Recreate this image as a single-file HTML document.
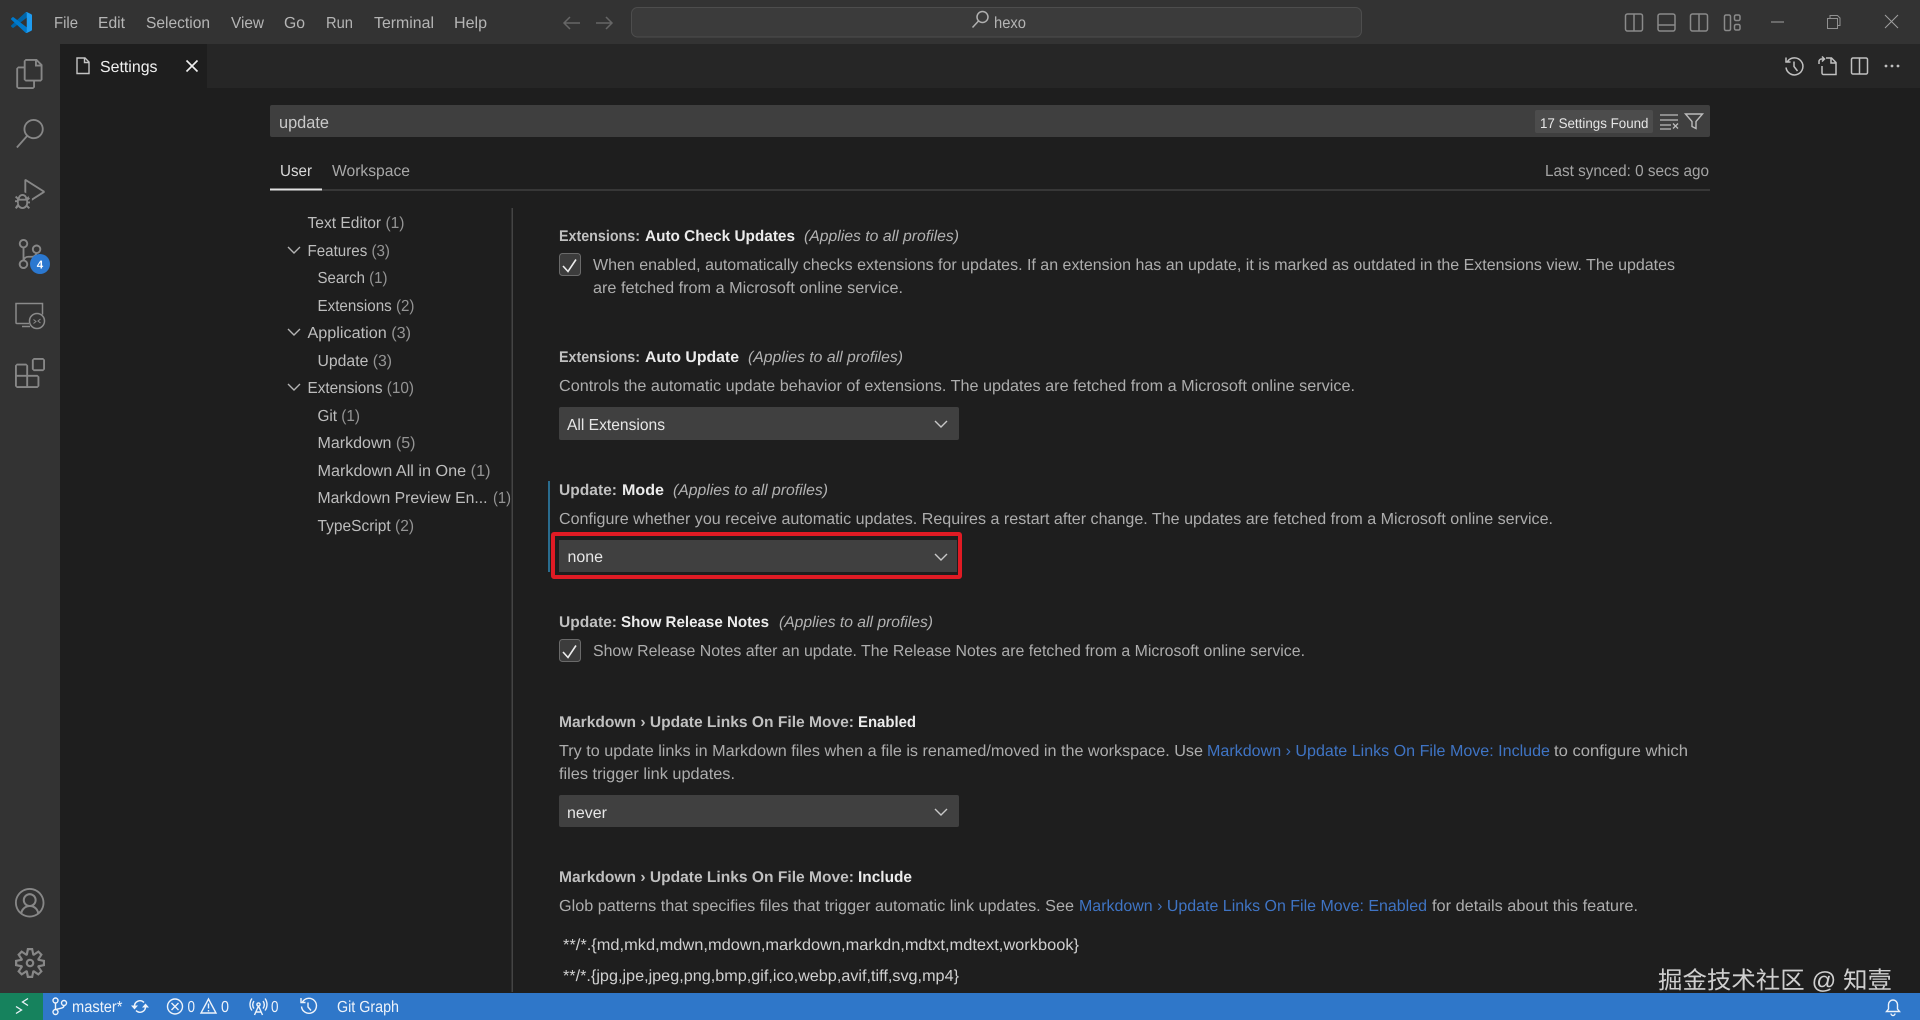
<!DOCTYPE html>
<html lang="en"><head><meta charset="utf-8"><title>Settings - hexo</title>
<style>
html,body{margin:0;padding:0;background:#1e1e1e;overflow:hidden}
svg{display:block}
text{font-family:"Liberation Sans","Noto Sans CJK SC",sans-serif;font-size:16px;text-rendering:geometricPrecision;white-space:pre}
.m{fill:#b5b5b5}.d{fill:#adadad}.t{fill:#c0c0c0;font-weight:700;font-size:15.5px}.b{fill:#ececec;font-weight:700;font-size:15.5px}
.i{fill:#b2b2b2;font-style:italic;font-size:15.5px}.l{fill:#3f74c4}.c{fill:#bdbdbd}.n{fill:#949494}.s{fill:#e6e6e6}.w{fill:#eef3fa}
.ic{fill:none;stroke:#8a8a8a;stroke-width:1.5}.ac{fill:#878787}.wi{fill:none;stroke:#eef3fa;stroke-width:1.4}
</style></head><body>
<svg xmlns="http://www.w3.org/2000/svg" width="1920" height="1020" viewBox="0 0 1920 1020">
<rect width="1920" height="1020" fill="#1e1e1e"/>
<!-- title bar -->
<rect width="1920" height="44" fill="#333"/>
<g transform="translate(11,12) scale(.21)">
<path fill="#0065a9" d="M96.4614 10.7962L75.8569 0.875542C73.4719 -0.272773 70.6217 0.211611 68.75 2.08333L1.29858 63.5832C-0.515693 65.2373 -0.513607 68.0937 1.30308 69.7452L6.81272 74.754C8.29793 76.1042 10.5347 76.2036 12.1338 74.9905L93.3609 13.3699C96.086 11.3026 100 13.2462 100 16.6667V16.4275C100 14.0265 98.6246 11.8378 96.4614 10.7962Z"/>
<path fill="#007acc" d="M96.4614 89.2038L75.8569 99.1245C73.4719 100.273 70.6217 99.7884 68.75 97.9167L1.29858 36.4169C-0.515693 34.7627 -0.513607 31.9063 1.30308 30.2548L6.81272 25.246C8.29793 23.8958 10.5347 23.7964 12.1338 25.0095L93.3609 86.6301C96.086 88.6974 100 86.7538 100 83.3334V83.5726C100 85.9735 98.6246 88.1622 96.4614 89.2038Z"/>
<path fill="#1f9cf0" d="M75.8578 99.1263C73.4721 100.274 70.6219 99.7885 68.75 97.9166C71.0564 100.223 75 98.5895 75 95.3278V4.67213C75 1.41039 71.0564 -0.223106 68.75 2.08329C70.6219 0.211402 73.4721 -0.273666 75.8578 0.873633L96.4587 10.7807C98.6234 11.8217 100 14.0112 100 16.4132V83.5871C100 85.9891 98.6234 88.1786 96.4586 89.2196L75.8578 99.1263Z"/>
</g>
<text class="m" x="54" y="28" textLength="24" lengthAdjust="spacingAndGlyphs">File</text>
<text class="m" x="98" y="28" textLength="27" lengthAdjust="spacingAndGlyphs">Edit</text>
<text class="m" x="146" y="28" textLength="64" lengthAdjust="spacingAndGlyphs">Selection</text>
<text class="m" x="231" y="28" textLength="33" lengthAdjust="spacingAndGlyphs">View</text>
<text class="m" x="284" y="28" textLength="21" lengthAdjust="spacingAndGlyphs">Go</text>
<text class="m" x="326" y="28" textLength="27" lengthAdjust="spacingAndGlyphs">Run</text>
<text class="m" x="374" y="28" textLength="60" lengthAdjust="spacingAndGlyphs">Terminal</text>
<text class="m" x="454" y="28" textLength="33" lengthAdjust="spacingAndGlyphs">Help</text>
<path d="M580 23H564M570 17l-6 6 6 6M596 23h16M606 17l6 6-6 6" fill="none" stroke="#666" stroke-width="1.5"/>
<rect x="631.5" y="7.5" width="730" height="29.5" rx="6" fill="#3b3b3b" stroke="#4d4d4d"/>
<circle cx="982.5" cy="17" r="5.5" class="ic" style="stroke:#b0b0b0"/><path d="M978.5 21l-6 6.5" class="ic" style="stroke:#b0b0b0"/>
<text class="m" x="994" y="28" textLength="32" lengthAdjust="spacingAndGlyphs">hexo</text>
<g class="ic">
<rect x="1625.5" y="14" width="17" height="17" rx="2"/><path d="M1634 14v17"/>
<rect x="1658" y="14" width="17" height="17" rx="2"/><path d="M1658 25h17"/>
<rect x="1690.5" y="14" width="17" height="17" rx="2"/><path d="M1699 14v17"/>
<rect x="1724.5" y="15" width="6" height="15.5" rx="1.5"/><rect x="1734.5" y="15" width="5.5" height="5.5" rx="1.5"/><rect x="1734.5" y="24.5" width="5.5" height="5.5" rx="1.5"/>
</g>
<path d="M1771 22h13" stroke="#a0a0a0" stroke-width="1"/>
<path d="M1827.5 18.500h10v10h-10zM1830 18.500v-3h7.500l2.500 2.500v7.500h-2.500" fill="none" stroke="#909090"/>
<path d="M1885 15l13 13M1898 15l-13 13" stroke="#a0a0a0" stroke-width="1"/>
<!-- activity bar -->
<rect y="44" width="60" height="949" fill="#333"/>
<g class="ac">
<path transform="translate(15,59) scale(1.25)" d="M17.5 0h-9L7 1.5V6H2.5L1 7.500v15.070L2.500 24h12.070L16 22.570V18h4.700l1.300-1.430V4.500L17.500 0zm0 2.120l2.380 2.380H17.500V2.120zm-3 20.380h-12v-15H7v9.070L8.500 18h6v4.500zm6-6h-12v-15H16V6h4.500v10.500z"/>
<path transform="translate(15,119) scale(1.22)" d="M15.250 0a8.250 8.250 0 0 0-6.180 13.720L1 22.880l1.120 1 8.050-9.120A8.251 8.251 0 1 0 15.250.01V0zm0 15a6.750 6.750 0 1 1 0-13.500 6.750 6.750 0 0 1 0 13.500z"/>
<path transform="translate(15,179) scale(1.25)" d="M10.940 13.500l-1.320 1.320a3.730 3.730 0 0 0-7.240 0L1.060 13.500 0 14.560l1.720 1.720-.22.720H0v1.500h1.500v.080c.077.489.214.966.41 1.420L0 22.940 1.060 24l1.650-1.650A4.308 4.308 0 0 0 6 24a4.310 4.310 0 0 0 3.290-1.650L10.940 24 12 22.940l-1.910-1.920c.196-.454.333-.931.41-1.420v-.1H12V18h-1.500l-.22-.72L12 15.560l-1.060-1.060zM6 13.500a2.250 2.250 0 0 1 2.250 2.250h-4.500A2.250 2.250 0 0 1 6 13.500zm3 6a3.330 3.330 0 0 1-3 3 3.330 3.330 0 0 1-3-3v-2.250h6v2.250zm14.760-9.900v1.260L13.500 17.370V15.600l8.500-5.370L9 2v9.460a5.070 5.070 0 0 0-1.500-.72V.63L8.640 0l15.120 9.600z"/>
<path transform="translate(15,239) scale(1.25)" d="M21.007 8.222A3.738 3.738 0 0 0 15.045 5.200a3.737 3.737 0 0 0 1.156 6.583 2.988 2.988 0 0 1-2.668 1.670h-2.990a4.456 4.456 0 0 0-2.989 1.165V7.400a3.737 3.737 0 1 0-1.494 0v9.117a3.776 3.776 0 1 0 1.816.099 2.990 2.990 0 0 1 2.668-1.667h2.990a4.484 4.484 0 0 0 4.223-3.039 3.736 3.736 0 0 0 3.250-3.687zM4.565 3.738a2.242 2.242 0 1 1 4.484 0 2.242 2.242 0 0 1-4.484 0zm4.484 16.441a2.242 2.242 0 1 1-4.484 0 2.242 2.242 0 0 1 4.484 0zm8.221-9.715a2.242 2.242 0 1 1 0-4.485 2.242 2.242 0 0 1 0 4.485z"/>
<path transform="translate(15,358) scale(1.25)" d="M13.500 1.500L15 0h7.500L24 1.500V9l-1.500 1.500H15L13.500 9V1.500zm1.500 0V9h7.500V1.500H15zM0 15V6l1.500-1.500H9L10.500 6v7.500H18l1.500 1.500v7.500L18 24H1.500L0 22.500V15zm9-1.500V6H1.500v7.500H9zM9 15H1.500v7.500H9V15zm1.500 7.500H18V15h-7.500v7.500z"/>
<path transform="translate(15,888) scale(1.84)" d="M16 7.992C16 3.580 12.416 0 8 0S0 3.580 0 7.992c0 2.430 1.104 4.620 2.832 6.090.016.016.032.016.032.032.144.112.288.224.448.336.080.048.144.111.224.175A7.980 7.980 0 0 0 8.016 16a7.980 7.980 0 0 0 4.480-1.375c.080-.048.144-.111.224-.160.144-.111.304-.223.448-.335.016-.016.032-.016.032-.032 1.696-1.487 2.800-3.676 2.800-6.106zm-8 7.001c-1.504 0-2.880-.48-4.016-1.279.016-.128.048-.255.080-.383a4.170 4.170 0 0 1 .416-.991c.176-.304.384-.576.640-.816.240-.24.528-.463.816-.639.304-.176.624-.304.976-.4A4.150 4.150 0 0 1 8 10.342a4.185 4.185 0 0 1 2.928 1.166c.368.368.656.8.864 1.295.112.288.192.592.24.911A7.030 7.030 0 0 1 8 14.993zm-2.448-7.400a2.490 2.490 0 0 1-.208-1.024c0-.351.064-.703.208-1.023.144-.32.336-.607.576-.847.240-.24.528-.431.848-.575.320-.144.672-.208 1.024-.208.368 0 .704.064 1.024.208.320.144.608.336.848.575.240.240.432.528.576.847.144.320.208.672.208 1.023 0 .368-.064.704-.208 1.023a2.840 2.840 0 0 1-.576.848 2.840 2.840 0 0 1-.848.575 2.715 2.715 0 0 1-2.064 0 2.840 2.840 0 0 1-.848-.575 2.526 2.526 0 0 1-.56-.848zm7.424 5.306c0-.032-.016-.048-.016-.080a5.220 5.220 0 0 0-.688-1.406 4.883 4.883 0 0 0-1.088-1.135 5.207 5.207 0 0 0-1.040-.608 2.820 2.820 0 0 0 .464-.383 4.200 4.200 0 0 0 .624-.784 3.624 3.624 0 0 0 .528-1.934 3.710 3.710 0 0 0-.288-1.470 3.799 3.799 0 0 0-.816-1.199 3.845 3.845 0 0 0-1.200-.8 3.720 3.720 0 0 0-1.472-.287 3.720 3.720 0 0 0-1.472.288 3.631 3.631 0 0 0-1.200.815 3.840 3.840 0 0 0-.8 1.199 3.710 3.710 0 0 0-.288 1.470c0 .352.048.688.144 1.007.096.336.224.640.4.927.160.288.384.544.624.784.144.144.304.271.48.383a5.120 5.120 0 0 0-1.040.624c-.416.320-.784.703-1.088 1.119a4.999 4.999 0 0 0-.688 1.406c-.016.032-.016.064-.016.080C1.776 11.636.992 9.910.992 7.992.992 4.140 4.144.991 8 .991s7.008 3.149 7.008 7.001a6.960 6.960 0 0 1-2.032 4.907z"/>
<path transform="translate(15,948) scale(1.25)" d="M19.850 8.750l4.150.83v4.840l-4.150.83 2.350 3.520-3.430 3.430-3.520-2.350-.83 4.150H9.580l-.83-4.150-3.520 2.350-3.430-3.430 2.350-3.520L0 14.420V9.580l4.150-.83L1.800 5.230 5.230 1.800l3.520 2.350L9.580 0h4.840l.83 4.150 3.520-2.350 3.430 3.430-2.350 3.520zm-1.570 5.070l4-.81v-2l-4-.81-.54-1.300 2.290-3.430-1.430-1.430-3.430 2.290-1.300-.54-.81-4h-2l-.81 4-1.300.54-3.430-2.290-1.430 1.430L6.380 8.900l-.54 1.300-4 .81v2l4 .81.54 1.300-2.290 3.430 1.430 1.430 3.430-2.290 1.300.54.81 4h2l.81-4 1.300-.54 3.430 2.290 1.430-1.430-2.290-3.430.54-1.300zm-8.186-4.672A3.430 3.430 0 0 1 12 8.570 3.440 3.440 0 0 1 15.430 12a3.430 3.430 0 1 1-5.336-2.852zm.956 4.274c.281.188.612.288.95.288A1.700 1.700 0 0 0 13.710 12a1.710 1.710 0 1 0-2.660 1.422z"/>
</g>
<circle cx="40" cy="264" r="10" fill="#2b78d0"/>
<text x="40" y="268.500" text-anchor="middle" fill="#fff" style="font-size:11.500px;font-weight:700">4</text>
<path d="M29 323.500h-12a1 1 0 0 1-1-1V303.500h26.500v11M22 326.500h8" class="ic"/>
<circle cx="37" cy="321" r="7.500" class="ic"/>
<path d="M33.500 323.500l2.500-2-2.500-2M40.500 319l-2.500 2 2.500 2" fill="none" stroke="#8a8a8a" stroke-width="1"/>
<!-- tab bar -->
<rect x="60" y="44" width="1860" height="44" fill="#262626"/>
<rect x="60" y="44" width="147" height="44" fill="#1e1e1e"/>
<path d="M77 58h8l4 4v11.500H77zM84.500 58v4.500H89" fill="none" stroke="#c4c4c4" stroke-width="1.400"/>
<text x="100" y="72" fill="#f0f0f0" textLength="57.500" lengthAdjust="spacingAndGlyphs">Settings</text>
<path d="M186.500 60.500l11 11M197.500 60.500l-11 11" stroke="#f0f0f0" stroke-width="1.600"/>
<g fill="none" stroke="#c0c0c0" stroke-width="1.500">
<path d="M1787.500 61.500a8.500 8.500 0 1 1-1.500 6M1786 57.500v4.500h4.500M1794 61.500v5l3.500 4.500"/>
<path d="M1826 58h5.500l4.500 4.500v12h-12.500a1.500 1.500 0 0 1-1.500-1.500V66M1831 58v5h5M1819 64v-2.500a2.500 2.500 0 0 1 2.500-2.500h2.500M1822 56.500l2.500 2.500-2.500 2.500"/>
<rect x="1851.500" y="58" width="16" height="16" rx="1.500"/><path d="M1859.500 58v16"/>
</g>
<g fill="#c0c0c0"><circle cx="1886" cy="66" r="1.400"/><circle cx="1892" cy="66" r="1.400"/><circle cx="1898" cy="66" r="1.400"/></g>
<!-- search -->
<rect x="270" y="105" width="1440" height="32" rx="2" fill="#3f3f3f"/>
<text x="279" y="128" fill="#c8c8c8" style="font-size:17px" textLength="50" lengthAdjust="spacingAndGlyphs">update</text>
<rect x="1535" y="110" width="118" height="23" rx="2" fill="#4c4c4c"/>
<text class="s" x="1540" y="128" style="font-size:14px" textLength="108.500" lengthAdjust="spacingAndGlyphs">17 Settings Found</text>
<path d="M1660 115h18M1660 120h18M1660 125h11M1660 129h11M1673 123.500l5 5M1678 123.500l-5 5" fill="none" stroke="#bcbcbc" stroke-width="1.300"/>
<path d="M1685.500 114h17l-6.500 7.500v7l-4-2v-5z" fill="none" stroke="#bcbcbc" stroke-width="1.400"/>
<!-- settings tabs -->
<rect x="270" y="189.500" width="1440" height="1" fill="#505050"/>
<rect x="270" y="188.500" width="52" height="2" fill="#e2e2e2"/>
<text fill="#d8d8d8" x="280" y="176" textLength="32" lengthAdjust="spacingAndGlyphs">User</text>
<text fill="#a8a8a8" x="332" y="176" textLength="78" lengthAdjust="spacingAndGlyphs">Workspace</text>
<text fill="#a4a4a4" x="1545" y="176" textLength="164" lengthAdjust="spacingAndGlyphs">Last synced: 0 secs ago</text>
<!-- toc -->
<rect x="511.500" y="208" width="1.500" height="784" fill="#444"/>
<g class="c">
<text x="307.500" y="228" textLength="97" lengthAdjust="spacingAndGlyphs">Text Editor <tspan class="n">(1)</tspan></text>
<text x="307.500" y="256" textLength="82.500" lengthAdjust="spacingAndGlyphs">Features <tspan class="n">(3)</tspan></text>
<text x="317.500" y="283" textLength="70" lengthAdjust="spacingAndGlyphs">Search <tspan class="n">(1)</tspan></text>
<text x="317.500" y="311" textLength="97" lengthAdjust="spacingAndGlyphs">Extensions <tspan class="n">(2)</tspan></text>
<text x="307.500" y="338" textLength="103.500" lengthAdjust="spacingAndGlyphs">Application <tspan class="n">(3)</tspan></text>
<text x="317.500" y="366" textLength="74.500" lengthAdjust="spacingAndGlyphs">Update <tspan class="n">(3)</tspan></text>
<text x="307.500" y="393" textLength="106.500" lengthAdjust="spacingAndGlyphs">Extensions <tspan class="n">(10)</tspan></text>
<text x="317.500" y="421" textLength="42.500" lengthAdjust="spacingAndGlyphs">Git <tspan class="n">(1)</tspan></text>
<text x="317.500" y="448" textLength="98" lengthAdjust="spacingAndGlyphs">Markdown <tspan class="n">(5)</tspan></text>
<text x="317.500" y="476" textLength="173" lengthAdjust="spacingAndGlyphs">Markdown All in One <tspan class="n">(1)</tspan></text>
<text x="317.500" y="503" textLength="170" lengthAdjust="spacingAndGlyphs">Markdown Preview En...</text>
<text class="n" x="493" y="503" textLength="18" lengthAdjust="spacingAndGlyphs">(1)</text>
<text x="317.500" y="531" textLength="96.500" lengthAdjust="spacingAndGlyphs">TypeScript <tspan class="n">(2)</tspan></text>
</g>
<path d="M288 247l6 6 6-6M288 329l6 6 6-6M288 384l6 6 6-6" fill="none" stroke="#b4b4b4" stroke-width="1.400"/>
<!-- setting 1 -->
<text class="t" x="559" y="241" textLength="81" lengthAdjust="spacingAndGlyphs">Extensions:</text>
<text class="b" x="645" y="241" textLength="150" lengthAdjust="spacingAndGlyphs">Auto Check Updates</text>
<text class="i" x="804" y="241" textLength="155" lengthAdjust="spacingAndGlyphs">(Applies to all profiles)</text>
<rect x="559.500" y="253.500" width="21" height="22" rx="3" fill="#3c3c3c" stroke="#6a6a6a"/>
<path d="M563 266l5 5.500 8-12" fill="none" stroke="#ededed" stroke-width="1.600"/>
<text class="d" x="593" y="270" textLength="1082" lengthAdjust="spacingAndGlyphs">When enabled, automatically checks extensions for updates. If an extension has an update, it is marked as outdated in the Extensions view. The updates</text>
<text class="d" x="593" y="293" textLength="310" lengthAdjust="spacingAndGlyphs">are fetched from a Microsoft online service.</text>
<!-- setting 2 -->
<text class="t" x="559" y="362" textLength="81" lengthAdjust="spacingAndGlyphs">Extensions:</text>
<text class="b" x="645" y="362" textLength="94" lengthAdjust="spacingAndGlyphs">Auto Update</text>
<text class="i" x="748" y="362" textLength="155" lengthAdjust="spacingAndGlyphs">(Applies to all profiles)</text>
<text class="d" x="559" y="391" textLength="796" lengthAdjust="spacingAndGlyphs">Controls the automatic update behavior of extensions. The updates are fetched from a Microsoft online service.</text>
<rect x="559" y="407" width="400" height="33" rx="2" fill="#404040"/>
<text class="s" x="567" y="430" textLength="98" lengthAdjust="spacingAndGlyphs">All Extensions</text>
<path d="M935 421l6 6 6-6" fill="none" stroke="#c8c8c8" stroke-width="1.400"/>
<!-- update mode -->
<rect x="548" y="481" width="2" height="91" fill="#2a6c8e"/>
<text class="t" x="559" y="495" textLength="58" lengthAdjust="spacingAndGlyphs">Update:</text>
<text class="b" x="622" y="495" textLength="42" lengthAdjust="spacingAndGlyphs">Mode</text>
<text class="i" x="673" y="495" textLength="155" lengthAdjust="spacingAndGlyphs">(Applies to all profiles)</text>
<text class="d" x="559" y="524" textLength="994" lengthAdjust="spacingAndGlyphs">Configure whether you receive automatic updates. Requires a restart after change. The updates are fetched from a Microsoft online service.</text>
<rect x="559" y="540" width="398" height="32" fill="#404040"/>
<text class="s" x="567.500" y="562" textLength="35.500" lengthAdjust="spacingAndGlyphs">none</text>
<path d="M935 554l6 6 6-6" fill="none" stroke="#c8c8c8" stroke-width="1.400"/>
<rect x="553" y="534" width="407" height="43" rx="1" fill="none" stroke="#e01b24" stroke-width="4"/>
<!-- release notes -->
<text class="t" x="559" y="627" textLength="58" lengthAdjust="spacingAndGlyphs">Update:</text>
<text class="b" x="621" y="627" textLength="148" lengthAdjust="spacingAndGlyphs">Show Release Notes</text>
<text class="i" x="779" y="627" textLength="154" lengthAdjust="spacingAndGlyphs">(Applies to all profiles)</text>
<rect x="559.500" y="639.500" width="21" height="22" rx="3" fill="#3c3c3c" stroke="#6a6a6a"/>
<path d="M563 652l5 5.500 8-12" fill="none" stroke="#ededed" stroke-width="1.600"/>
<text class="d" x="593" y="656" textLength="712" lengthAdjust="spacingAndGlyphs">Show Release Notes after an update. The Release Notes are fetched from a Microsoft online service.</text>
<!-- md enabled -->
<text class="t" x="559" y="727" textLength="295" lengthAdjust="spacingAndGlyphs">Markdown › Update Links On File Move:</text>
<text class="b" x="858" y="727" textLength="58" lengthAdjust="spacingAndGlyphs">Enabled</text>
<text class="d" x="559" y="756" textLength="644" lengthAdjust="spacingAndGlyphs">Try to update links in Markdown files when a file is renamed/moved in the workspace. Use</text>
<text class="l" x="1207" y="756" textLength="343" lengthAdjust="spacingAndGlyphs">Markdown › Update Links On File Move: Include</text>
<text class="d" x="1554" y="756" textLength="134" lengthAdjust="spacingAndGlyphs">to configure which</text>
<text class="d" x="559" y="779" textLength="176" lengthAdjust="spacingAndGlyphs">files trigger link updates.</text>
<rect x="559" y="795" width="400" height="32" rx="2" fill="#404040"/>
<text class="s" x="567" y="818" textLength="40" lengthAdjust="spacingAndGlyphs">never</text>
<path d="M935 809l6 6 6-6" fill="none" stroke="#c8c8c8" stroke-width="1.400"/>
<!-- md include -->
<text class="t" x="559" y="882" textLength="295" lengthAdjust="spacingAndGlyphs">Markdown › Update Links On File Move:</text>
<text class="b" x="858" y="882" textLength="54" lengthAdjust="spacingAndGlyphs">Include</text>
<text class="d" x="559" y="911" textLength="515" lengthAdjust="spacingAndGlyphs">Glob patterns that specifies files that trigger automatic link updates. See</text>
<text class="l" x="1079" y="911" textLength="348" lengthAdjust="spacingAndGlyphs">Markdown › Update Links On File Move: Enabled</text>
<text class="d" x="1432" y="911" textLength="206" lengthAdjust="spacingAndGlyphs">for details about this feature.</text>
<text x="563" y="950" fill="#cfcfcf" textLength="516" lengthAdjust="spacingAndGlyphs">**/*.{md,mkd,mdwn,mdown,markdown,markdn,mdtxt,mdtext,workbook}</text>
<text x="563" y="981" fill="#cfcfcf" textLength="396" lengthAdjust="spacingAndGlyphs">**/*.{jpg,jpe,jpeg,png,bmp,gif,ico,webp,avif,tiff,svg,mp4}</text>
<!-- status bar -->
<rect y="993" width="1920" height="27" fill="#2f77c9"/>
<rect y="993" width="43" height="27" fill="#16825d"/>
<path d="M16 1006.500l5.500 3.500-5.500 3.500M28 998.500l-5.500 3.500 5.500 3.500" fill="none" stroke="#eef3fa" stroke-width="1.300"/>
<g class="wi">
<circle cx="55.500" cy="1000.500" r="2.500"/><circle cx="55.500" cy="1012" r="2.500"/><circle cx="64" cy="1003" r="2.500"/>
<path d="M55.500 1003v6.500M64 1005.500c0 3-4 2.500-8 4"/>
<path d="M134.500 1006.500a5.500 5.500 0 0 1 9.500-4M145.500 1006.500a5.500 5.500 0 0 1-9.500 4"/>
<circle cx="175" cy="1006.500" r="7.500"/><path d="M171.500 1003l7 7M178.500 1003l-7 7"/>
<path d="M208.500 999l7.500 14h-15zM208.500 1003.500v5M208.500 1010v1.500"/>
<circle cx="258.500" cy="1004.500" r="1.600"/><path d="M258.500 1006l-4 9M258.500 1006l4 9M255.500 1012h6M254 1001a6 6 0 0 0 0 7.500M263 1001a6 6 0 0 1 0 7.500M252 998.500a10 10 0 0 0 0 12M265 998.500a10 10 0 0 1 0 12"/>
<path d="M302.500 1002a7.500 7.500 0 1 1-1 4.500M301 998v4.500h4.500M308 1002.500v4.500l3 3.500"/>
<path d="M1893 1000a4.500 4.500 0 0 1 4.500 4.500v4.500l2 2.500h-13l2-2.500v-4.500a4.500 4.500 0 0 1 4.500-4.500zM1891 1013.500a2 2 0 0 0 4 0"/>
</g>
<path d="M131 1005.500h7l-3.500 4zM149 1007.500h-7l3.500-4z" fill="#eef3fa"/>
<text class="w" x="72" y="1012" textLength="50.500" lengthAdjust="spacingAndGlyphs">master*</text>
<text class="w" x="187.500" y="1012" textLength="7.500" lengthAdjust="spacingAndGlyphs">0</text>
<text class="w" x="221" y="1012" textLength="8" lengthAdjust="spacingAndGlyphs">0</text>
<text class="w" x="271" y="1012" textLength="7.500" lengthAdjust="spacingAndGlyphs">0</text>
<text class="w" x="337" y="1012" textLength="62" lengthAdjust="spacingAndGlyphs">Git Graph</text>
<text x="1658" y="988.500" fill="#cfcfcf" style="font-size:24px" textLength="234" lengthAdjust="spacingAndGlyphs">掘金技术社区 @ 知壹</text>
</svg>
</body></html>
